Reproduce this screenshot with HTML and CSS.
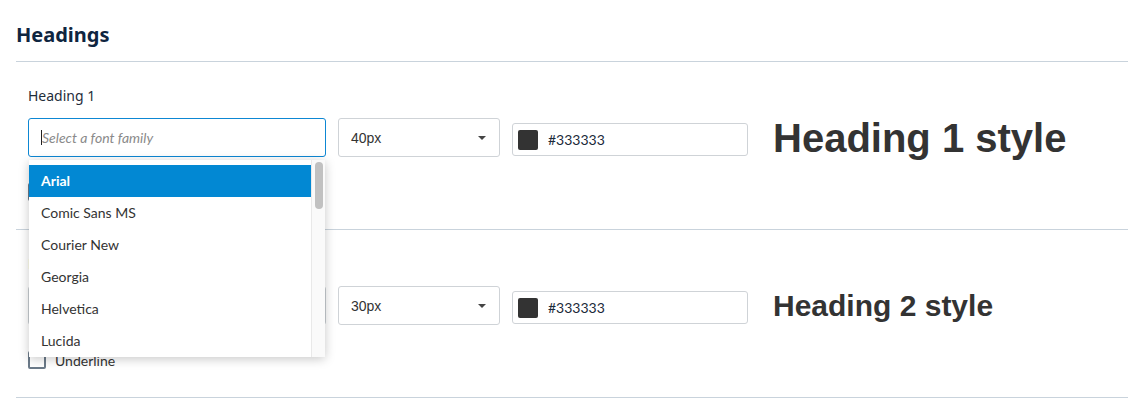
FILE: index.html
```html
<!DOCTYPE html>
<html>
<head>
<meta charset="utf-8">
<link rel="stylesheet" href="styles.css">
</head>
<body>
<div class="page">
  <h2 class="title">Headings</h2>

  <section class="heading-block">
    <div class="field-label">Heading 1</div>
    <div class="controls">
      <div class="font-field">
        <div class="font-input focused"><span class="caret-line"></span><span class="placeholder">Select a font family</span></div>
        <div class="dropdown">
          <ul class="options">
            <li class="option active">Arial</li>
            <li class="option">Comic Sans MS</li>
            <li class="option">Courier New</li>
            <li class="option">Georgia</li>
            <li class="option">Helvetica</li>
            <li class="option">Lucida</li>
            <li class="option">Tahoma</li>
          </ul>
          <div class="scrollbar"><div class="thumb"></div></div>
        </div>
      </div>
      <div class="size-select"><span>40px</span><span class="arrow"></span></div>
      <div class="color-input"><span class="swatch"></span><span class="hex">#333333</span></div>
      <div class="preview preview-h1">Heading 1 style</div>
    </div>
    <label class="check-row"><span class="checkbox"></span><span>Underline</span></label>
  </section>

  <section class="heading-block">
    <div class="field-label">Heading 2</div>
    <div class="controls">
      <div class="font-field">
        <div class="font-input"><span class="placeholder">Select a font family</span></div>
      </div>
      <div class="size-select"><span>30px</span><span class="arrow"></span></div>
      <div class="color-input"><span class="swatch"></span><span class="hex">#333333</span></div>
      <div class="preview preview-h2">Heading 2 style</div>
    </div>
    <label class="check-row"><span class="checkbox"></span><span>Underline</span></label>
  </section>
  <div class="end-line"></div>
</div>
</body>
</html>
```

FILE: styles.css
```css
html, body {
  margin: 0;
  padding: 0;
  background: #ffffff;
}

.page {
  padding-left: 16px;
  font-family: Lato, "Noto Sans", sans-serif;
  color: #333333;
}

.title {
  margin: 0;
  padding: 22px 0 13px;
  font-family: "Noto Sans", sans-serif;
  font-weight: 700;
  font-size: 20px;
  line-height: 26px;
  color: #0f2540;
}

.heading-block {
  border-top: 1px solid #c9d3dc;
  padding: 24px 0 28px 12px;
}

.end-line {
  border-top: 1px solid #c9d3dc;
  height: 16px;
}

.field-label {
  font-family: "Noto Sans", sans-serif;
  font-size: 14px;
  line-height: 20px;
  color: #1f2d3a;
  margin-bottom: 12px;
}

.controls {
  display: flex;
  align-items: flex-end;
  gap: 12px;
  height: 39px;
}

.font-field {
  position: relative;
  width: 298px;
  height: 39px;
  flex: none;
}

.font-input {
  box-sizing: border-box;
  width: 100%;
  height: 100%;
  border: 1px solid #c8cdd2;
  border-radius: 3px;
  display: flex;
  align-items: center;
  padding-left: 12px;
  background: #fff;
}

.font-input.focused {
  border-color: #0d87d3;
}

.caret-line {
  width: 1px;
  height: 15px;
  background: #222;
}

.placeholder {
  font-style: italic;
  font-size: 14px;
  color: #8a8a8a;
}

.dropdown {
  position: absolute;
  z-index: 10;
  top: 42px;
  left: 1px;
  width: 296px;
  height: 197px;
  background: #fff;
  box-shadow: 0 2px 10px rgba(0, 0, 0, 0.22);
  display: flex;
  overflow: hidden;
}

.options {
  list-style: none;
  margin: 0;
  padding: 5px 0 0;
  flex: 1;
  overflow: hidden;
}

.option {
  height: 32px;
  line-height: 32px;
  padding-left: 12px;
  font-size: 14px;
  color: #333;
}

.option.active {
  background: #0288d3;
  color: #fff;
  font-weight: 700;
}

.scrollbar {
  width: 14px;
  flex: none;
  background: #fafafa;
  border-left: 1px solid #e9e9e9;
  padding: 2px 3px 0 3px;
  box-sizing: border-box;
}

.thumb {
  width: 8px;
  height: 47px;
  border-radius: 4px;
  background: #c1c1c1;
}

.size-select {
  box-sizing: border-box;
  width: 162px;
  height: 39px;
  flex: none;
  border: 1px solid #cfd3d7;
  border-radius: 3px;
  display: flex;
  align-items: center;
  justify-content: space-between;
  padding: 0 12px;
  font-family: "Liberation Sans", Arial, sans-serif;
  font-size: 14px;
  color: #333;
  background: #fff;
}

.arrow {
  width: 0;
  height: 0;
  border-left: 4px solid transparent;
  border-right: 4px solid transparent;
  border-top: 4px solid #444;
  margin-right: 1px;
}

.color-input {
  box-sizing: border-box;
  width: 236px;
  height: 33px;
  flex: none;
  border: 1px solid #cfd3d7;
  border-radius: 3px;
  display: flex;
  align-items: center;
  padding-left: 5px;
  gap: 10px;
  margin-bottom: 1px;
  background: #fff;
}

.swatch {
  width: 20px;
  height: 20px;
  border-radius: 2px;
  background: #333333;
}

.hex {
  font-size: 14px;
  color: #1b2a3a;
}

.preview {
  align-self: center;
  margin-left: 13px;
  font-family: "Liberation Sans", Arial, sans-serif;
  font-weight: 700;
  color: #333333;
  white-space: nowrap;
}

.preview-h1 {
  font-size: 40px;
  line-height: 46px;
}

.preview-h2 {
  font-size: 30px;
  line-height: 36px;
}

.check-row {
  display: flex;
  align-items: center;
  gap: 9px;
  margin-top: 26px;
  height: 18px;
  font-size: 14px;
  color: #333;
}

.checkbox {
  box-sizing: border-box;
  width: 18px;
  height: 18px;
  border: 2px solid #6b7a89;
  border-radius: 2px;
  background: #fff;
}
```
